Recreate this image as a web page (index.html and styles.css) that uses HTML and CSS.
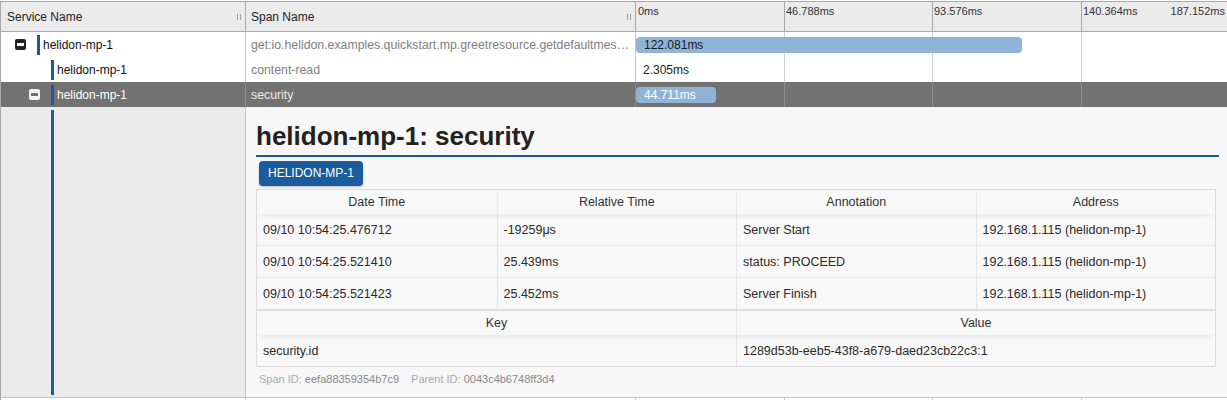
FILE: index.html
```html
<!DOCTYPE html>
<html lang="en">
<head>
<meta charset="utf-8">
<title>Trace</title>
<link rel="stylesheet" href="styles.css">
</head>
<body>
<div class="trace">
  <div class="row head">
    <div class="cell svc"><span class="label">Service Name</span><span class="grip"></span></div>
    <div class="cell span"><span class="label">Span Name</span><span class="grip"></span></div>
    <div class="cell tl">
      <div class="scale">
        <div class="mark"><span>0ms</span></div>
        <div class="mark"><span>46.788ms</span></div>
        <div class="mark"><span>93.576ms</span></div>
        <div class="mark last"><span>140.364ms</span><span>187.152ms</span></div>
      </div>
    </div>
  </div>

  <div class="row span-row">
    <div class="cell svc d0"><span class="toggle"></span><span class="svc-bar"></span><span class="svc-name">helidon-mp-1</span></div>
    <div class="cell span"><span class="span-name">get:io.helidon.examples.quickstart.mp.greetresource.getdefaultmessage</span></div>
    <div class="cell tl"><div class="bar" style="width:65.3%">122.081ms</div></div>
  </div>

  <div class="row span-row">
    <div class="cell svc d1"><span class="leaf"></span><span class="svc-bar"></span><span class="svc-name">helidon-mp-1</span></div>
    <div class="cell span"><span class="span-name">content-read</span></div>
    <div class="cell tl"><div class="bar empty" style="width:1.2%">2.305ms</div></div>
  </div>

  <div class="row span-row selected">
    <div class="cell svc d1"><span class="toggle"></span><span class="svc-bar"></span><span class="svc-name">helidon-mp-1</span></div>
    <div class="cell span"><span class="span-name">security</span></div>
    <div class="cell tl"><div class="bar" style="width:13.5%">44.711ms</div></div>
  </div>

  <div class="row detail-row">
    <div class="cell svc detail-svc"><span class="svc-bar"></span></div>
    <div class="detail">
      <h2 class="detail-title">helidon-mp-1: security</h2>
      <div class="badges"><span class="badge">HELIDON-MP-1</span></div>
      <div class="attrs">
        <div class="grid4 thead">
          <div class="th">Date Time</div>
          <div class="th">Relative Time</div>
          <div class="th">Annotation</div>
          <div class="th">Address</div>
        </div>
        <div class="tbody">
          <div class="grid4 tr">
            <div class="td">09/10 10:54:25.476712</div>
            <div class="td">-19259μs</div>
            <div class="td">Server Start</div>
            <div class="td">192.168.1.115 (helidon-mp-1)</div>
          </div>
          <div class="grid4 tr">
            <div class="td">09/10 10:54:25.521410</div>
            <div class="td">25.439ms</div>
            <div class="td">status: PROCEED</div>
            <div class="td">192.168.1.115 (helidon-mp-1)</div>
          </div>
          <div class="grid4 tr">
            <div class="td">09/10 10:54:25.521423</div>
            <div class="td">25.452ms</div>
            <div class="td">Server Finish</div>
            <div class="td">192.168.1.115 (helidon-mp-1)</div>
          </div>
        </div>
        <div class="kv">
          <div class="grid2 thead">
            <div class="th">Key</div>
            <div class="th">Value</div>
          </div>
          <div class="grid2 tr">
            <div class="td">security.id</div>
            <div class="td">1289d53b-eeb5-43f8-a679-daed23cb22c3:1</div>
          </div>
        </div>
      </div>
      <div class="ids">Span ID: <b>eefa88359354b7c9</b><span class="gap">Parent ID: </span><b>0043c4b6748ff3d4</b></div>
    </div>
  </div>

  <div class="row span-row">
    <div class="cell svc d0"></div>
    <div class="cell span"></div>
    <div class="cell tl"></div>
  </div>
</div>
</body>
</html>
```

FILE: styles.css
```css
* { box-sizing: border-box; }

html, body {
  margin: 0;
  padding: 0;
  background: #fff;
}

body {
  font-family: "Liberation Sans", Arial, Helvetica, sans-serif;
  font-size: 12px;
  color: #222;
  padding-top: 1px;
}

.trace {
  border-left: 1px solid #a9a9a9;
  border-top: 1px solid #a9a9a9;
}

.row {
  display: flex;
}

.cell {
  flex: none;
  display: flex;
  align-items: center;
}

.svc {
  width: 245px;
  border-right: 1px solid #c4c4c4;
}

.span {
  width: 390px;
  border-right: 1px solid #c4c4c4;
}

.tl {
  flex: 1;
  min-width: 0;
}

/* header */
.head {
  height: 30px;
  background: #ebebeb;
  border-bottom: 1px solid #a9a9a9;
}

.head .svc,
.head .span {
  border-right-color: #a9a9a9;
}

.head .label {
  flex: 1;
  padding-left: 6px;
  color: #1e1e1e;
}

.head .span .label {
  padding-left: 5px;
}

.grip {
  width: 4px;
  height: 6px;
  border-left: 1px solid #9a9a9a;
  border-right: 1px solid #9a9a9a;
  margin-right: 4px;
}

.head .tl {
  align-items: stretch;
}

.scale {
  flex: 1;
  display: grid;
  grid-template-columns: 148px 148px 149px 1fr;
}

.mark {
  padding: 3px 0 0 2px;
  font-size: 11px;
  line-height: 13px;
  color: #333;
}

.mark + .mark {
  border-left: 1px solid #a9a9a9;
  padding-left: 1px;
}

.mark.last {
  display: flex;
  justify-content: space-between;
  padding-right: 2px;
}

/* span rows */
.span-row {
  height: 25px;
  background: #fff;
}

.span-row .tl {
  background-image:
    linear-gradient(#cfcfcf, #cfcfcf),
    linear-gradient(#cfcfcf, #cfcfcf),
    linear-gradient(#cfcfcf, #cfcfcf);
  background-size: 1px 100%;
  background-position: 148px 0, 296px 0, 445px 0;
  background-repeat: no-repeat;
}

.d0 { padding-left: 14px; }
.d1 { padding-left: 28px; }

.toggle {
  position: relative;
  width: 11px;
  height: 11px;
  border-radius: 2px;
  background: #222;
  flex: none;
}

.toggle::after {
  content: "";
  position: absolute;
  left: 2px;
  top: 4px;
  width: 7px;
  height: 3px;
  background: #fff;
}

.leaf {
  width: 11px;
  flex: none;
}

.svc-bar {
  width: 3px;
  height: 20px;
  margin-left: 11px;
  background: #1c5b9b;
  flex: none;
}

.svc-name {
  margin-left: 3px;
  color: #111;
}

.span-name {
  padding-left: 5px;
  padding-right: 2px;
  font-size: 12.3px;
  color: #808080;
  white-space: nowrap;
  overflow: hidden;
  text-overflow: ellipsis;
  min-width: 0;
}

.bar {
  height: 16px;
  line-height: 16px;
  padding-left: 8px;
  border-radius: 4px;
  background: #8fb4d7;
  color: #1a1a1a;
  white-space: nowrap;
}

.bar.empty {
  background: transparent;
  padding-left: 7px;
}

.selected {
  background: #717271;
}

.selected .svc,
.selected .span {
  border-right-color: #8c8c8c;
}

.selected .tl {
  background-image:
    linear-gradient(#8e8e8e, #8e8e8e),
    linear-gradient(#8e8e8e, #8e8e8e),
    linear-gradient(#8e8e8e, #8e8e8e);
}

.selected .svc-name { color: #fff; }
.selected .span-name { color: #eeeeee; }
.selected .bar { color: #fff; }

.selected .toggle {
  background: #f2f2f2;
}

.selected .toggle::after {
  background: #717271;
}

/* detail */
.detail-row {
  border-bottom: 1px solid #c4c4c4;
}

.detail-svc {
  background: #ebebeb;
  align-items: stretch;
  padding-left: 39px;
  border-right-color: #c4c4c4;
}

.detail-svc .svc-bar {
  height: auto;
  margin: 3px 0 2px 11px;
}

.detail {
  flex: 1;
  min-width: 0;
  background: #f7f7f7;
  padding: 14px 8px 11px 10px;
}

.detail-title {
  margin: 0;
  font-size: 26px;
  line-height: 30px;
  font-weight: bold;
  color: #222;
  padding-bottom: 4px;
  border-bottom: 2px solid #1c5b9b;
}

.badges {
  padding: 4px 0 0 3px;
  display: flex;
}

.badge {
  height: 25px;
  line-height: 25px;
  padding: 0 9px;
  border-radius: 4px;
  background: #1b5c9c;
  color: #fff;
  font-size: 12px;
  box-shadow: 0 1px 2px rgba(0, 0, 0, 0.25);
}

.attrs {
  margin: 3px 3px 0 0;
  border: 1px solid #dcdcdc;
  background: #f8f8f8;
  color: #2a2a2a;
  font-size: 12.5px;
}

.grid4 {
  display: grid;
  grid-template-columns: repeat(4, 1fr);
}

.grid2 {
  display: grid;
  grid-template-columns: repeat(2, 1fr);
}

.thead {
  height: 24px;
  position: relative;
  box-shadow: 0 4px 6px -3px rgba(0, 0, 0, 0.09);
}

.th {
  display: flex;
  align-items: center;
  justify-content: center;
  color: #333;
}

.th + .th {
  border-left: 1px solid #ececec;
}

.tr {
  height: 32px;
  border-bottom: 1px solid #e6e6e6;
}

.tbody .tr:last-child,
.kv .tr:last-child {
  border-bottom: 0;
  height: 31px;
}

.td {
  display: flex;
  align-items: center;
  padding-left: 6px;
  white-space: nowrap;
}

.td + .td {
  border-left: 1px solid #e6e6e6;
}

.kv {
  border-top: 2px solid #dedede;
}

.ids {
  margin-top: 6px;
  padding-left: 3px;
  font-size: 11px;
  line-height: 13px;
  color: #aaa;
}

.ids b {
  font-weight: normal;
  color: #888;
}

.ids .gap {
  margin-left: 12px;
}
```
